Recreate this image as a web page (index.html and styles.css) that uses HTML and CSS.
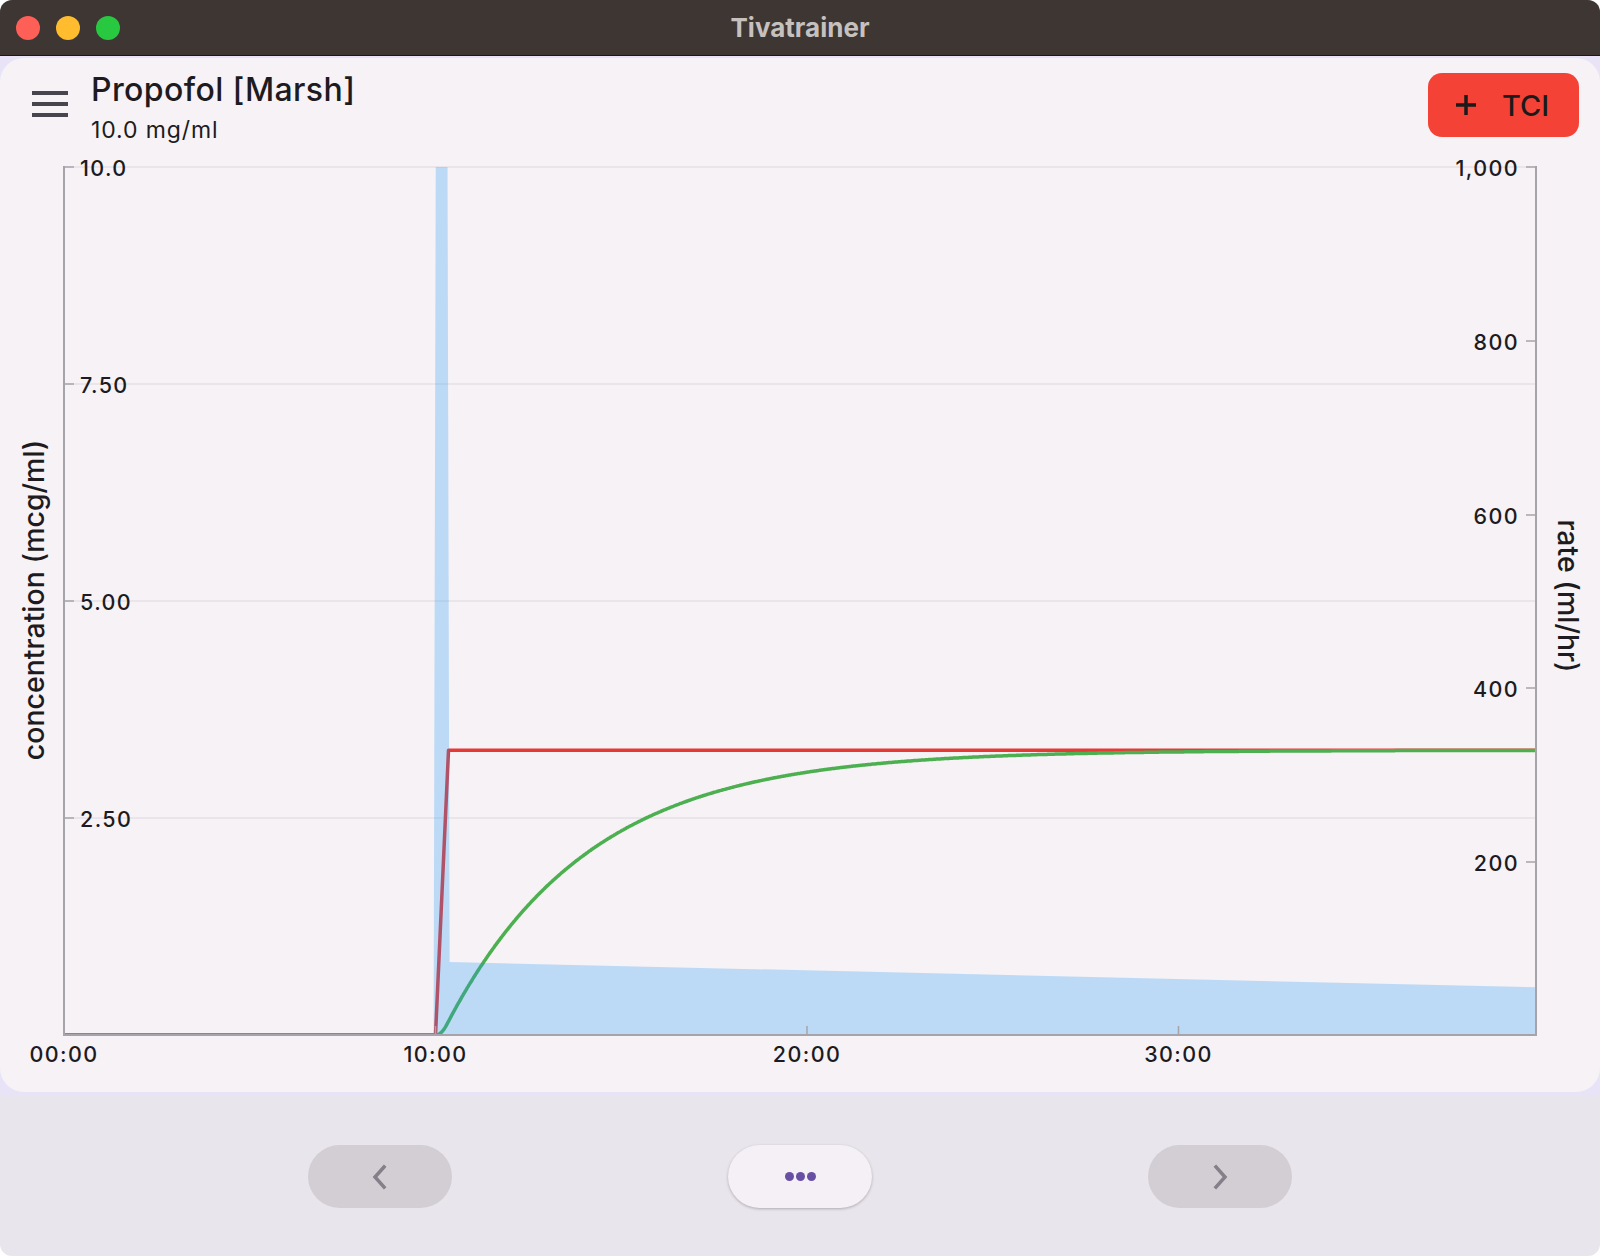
FILE: index.html
```html
<!DOCTYPE html>
<html lang="en">
<head>
    <meta charset="UTF-8">
    <meta name="viewport" content="width=device-width, initial-scale=1.0">
    <title>Tivatrainer</title>
    <link rel="stylesheet" href="styles.css">
</head>
<body>
    <div class="window">
        <div class="titlebar">
            <div class="lights">
                <span class="light red"></span>
                <span class="light yellow"></span>
                <span class="light green"></span>
            </div>
            <div class="window-title">Tivatrainer</div>
        </div>

        <div class="main">
            <div class="card">
                <header class="card-header">
                    <button class="menu-btn" aria-label="Menu">
                        <span></span><span></span><span></span>
                    </button>
                    <div class="drug">
                        <div class="drug-name">Propofol [Marsh]</div>
                        <div class="drug-conc">10.0 mg/ml</div>
                    </div>
                    <button class="tci-btn">
                        <svg class="plus" width="24" height="24" viewBox="0 0 24 24"><path d="M12 2v20M2 12h20" /></svg>
                        TCI
                    </button>
                </header>

                <svg class="chart" width="1600" height="942" viewBox="0 0 1600 942">
                    <defs>
                        <clipPath id="plot-area">
                            <rect x="64" y="17" width="1472" height="868"></rect>
                        </clipPath>
                    </defs>

                    <!-- grid -->
                    <g class="grid">
                        <line x1="64" y1="17" x2="1536" y2="17"></line>
                        <line x1="64" y1="234" x2="1536" y2="234"></line>
                        <line x1="64" y1="451" x2="1536" y2="451"></line>
                        <line x1="64" y1="668" x2="1536" y2="668"></line>
                    </g>

                    <!-- data -->
                    <g clip-path="url(#plot-area)">
                        <path id="target-line" class="line target"></path>
                        <path id="effect-line" class="line effect"></path>
                        <path id="rate-area" class="rate"></path>
                    </g>

                    <!-- axes -->
                    <g class="axis">
                        <line x1="64" y1="16" x2="64" y2="886"></line>
                        <line x1="1536" y1="16" x2="1536" y2="886"></line>
                        <line x1="63" y1="885" x2="1537" y2="885"></line>
                    </g>
                    <g class="ticks">
                        <line x1="64" y1="17" x2="74" y2="17"></line>
                        <line x1="64" y1="234" x2="74" y2="234"></line>
                        <line x1="64" y1="451" x2="74" y2="451"></line>
                        <line x1="64" y1="668" x2="74" y2="668"></line>

                        <line x1="1526" y1="17" x2="1536" y2="17"></line>
                        <line x1="1526" y1="191" x2="1536" y2="191"></line>
                        <line x1="1526" y1="365" x2="1536" y2="365"></line>
                        <line x1="1526" y1="538" x2="1536" y2="538"></line>
                        <line x1="1526" y1="712" x2="1536" y2="712"></line>

                        <line x1="435.5" y1="876" x2="435.5" y2="885"></line>
                        <line x1="807" y1="876" x2="807" y2="885"></line>
                        <line x1="1178.5" y1="876" x2="1178.5" y2="885"></line>
                    </g>

                    <g class="tick-label left">
                        <text x="80" y="18">10.0</text>
                        <text x="80" y="235">7.50</text>
                        <text x="80" y="452">5.00</text>
                        <text x="80" y="669">2.50</text>
                    </g>
                    <g class="tick-label right">
                        <text x="1519" y="18">1,000</text>
                        <text x="1519" y="192">800</text>
                        <text x="1519" y="366">600</text>
                        <text x="1519" y="539">400</text>
                        <text x="1519" y="713">200</text>
                    </g>
                    <g class="tick-label bottom">
                        <text x="64" y="904">00:00</text>
                        <text x="435.5" y="904">10:00</text>
                        <text x="807" y="904">20:00</text>
                        <text x="1178.5" y="904">30:00</text>
                    </g>

                    <text class="axis-title" transform="translate(33 450) rotate(-90)">concentration (mcg/ml)</text>
                    <text class="axis-title" transform="translate(1568 446) rotate(90)">rate (ml/hr)</text>
                </svg>
            </div>
        </div>

        <nav class="bottom-bar">
            <button class="nav-btn" aria-label="Previous">
                <svg width="24" height="28" viewBox="0 0 24 28"><path d="M16 4l-9 10 9 10" /></svg>
            </button>
            <button class="nav-btn more" aria-label="More">
                <span class="dot"></span><span class="dot"></span><span class="dot"></span>
            </button>
            <button class="nav-btn" aria-label="Next">
                <svg width="24" height="28" viewBox="0 0 24 28"><path d="M8 4l9 10-9 10" /></svg>
            </button>
        </nav>
    </div>

    <script>
        // plot area in chart coordinates
        const X0 = 64, X1 = 1536, Y0 = 17, Y1 = 885;
        const PX_PER_MIN = 37.15;
        const END = (X1 - X0) / PX_PER_MIN;

        const x = m => X0 + m * PX_PER_MIN;
        const yConc = c => Y1 - c * (Y1 - Y0) / 10;
        const yRate = r => Y1 - r * (Y1 - Y0) / 1000;

        const target = 3.28;
        const ke0 = 0.26; // per min

        function toPath(points) {
            return points.map((p, i) => (i ? 'L' : 'M') + p[0].toFixed(1) + ' ' + p[1].toFixed(1)).join(' ');
        }

        // target concentration (red)
        const targetPts = [[0, 0], [10.0, 0], [10.35, target], [END, target]];
        document.getElementById('target-line').setAttribute('d',
            toPath(targetPts.map(p => [x(p[0]), yConc(p[1])])));

        // effect site concentration (green)
        let ce = 0;
        const dt = 0.02;
        const effectPts = [];
        for (let t = 0; t <= END + dt; t += dt) {
            let cp = 0;
            if (t > 10.02) cp = Math.min(target, target * (t - 10.02) / 0.3);
            ce += ke0 * (cp - ce) * dt;
            effectPts.push([x(Math.min(t, END)), yConc(ce)]);
        }
        document.getElementById('effect-line').setAttribute('d', toPath(effectPts));

        // infusion rate (blue)
        const ratePts = [[9.95, 0], [10.03, 1400], [10.3, 1400], [10.38, 84], [END, 55], [END, 0]];
        document.getElementById('rate-area').setAttribute('d',
            toPath(ratePts.map(p => [x(p[0]), yRate(p[1])])) + ' Z');
    </script>
</body>
</html>
```

FILE: styles.css
```css
body {
    margin: 0;
    padding: 0;
    background-color: #fff;
    font-family: 'Inter', 'Roboto', sans-serif;
    color: #1d1b20;
}

button {
    font-family: inherit;
    border: none;
    cursor: pointer;
}

.window {
    width: 1600px;
    height: 1256px;
    border-radius: 12px;
    overflow: hidden;
    display: flex;
    flex-direction: column;
    background-color: #e8e5ec;
}

/* title bar */
.titlebar {
    height: 55px;
    flex-shrink: 0;
    background-color: #3e3633;
    border-bottom: 1px solid #1c1816;
    display: flex;
    align-items: center;
    position: relative;
}

.lights {
    display: flex;
    gap: 16px;
    padding-left: 16px;
}

.light {
    width: 24px;
    height: 24px;
    border-radius: 50%;
}

.light.red { background-color: #fe5f57; }
.light.yellow { background-color: #febc2e; }
.light.green { background-color: #28c840; }

.window-title {
    position: absolute;
    left: 0;
    right: 0;
    text-align: center;
    color: #c6c1bf;
    font-size: 26px;
    font-weight: 700;
}

/* main card */
.main {
    background-color: #e9e3f8;
    padding: 2px 0 3px;
}

.card {
    height: 1034px;
    background-color: #f6f2f6;
    border-radius: 24px;
    display: flex;
    flex-direction: column;
}

.card-header {
    height: 92px;
    flex-shrink: 0;
    display: flex;
    align-items: flex-start;
    padding: 0 21px 0 32px;
    box-sizing: border-box;
}

.menu-btn {
    width: 36px;
    height: 26px;
    margin-top: 33px;
    padding: 0;
    background: none;
    display: flex;
    flex-direction: column;
    justify-content: space-between;
}

.menu-btn span {
    display: block;
    width: 36px;
    height: 4px;
    background-color: #49454f;
}

.drug {
    margin-left: 23px;
    margin-top: 13px;
}

.drug-name {
    font-size: 32px;
    font-weight: 500;
    line-height: 38px;
    letter-spacing: 0.4px;
}

.drug-conc {
    font-size: 23px;
    line-height: 28px;
    margin-top: 7px;
    letter-spacing: 0.9px;
}

.tci-btn {
    margin-left: auto;
    margin-top: 15px;
    width: 151px;
    height: 64px;
    border-radius: 14px;
    background-color: #f44336;
    color: #1a1a1a;
    font-size: 29px;
    font-weight: 500;
    display: flex;
    align-items: center;
    justify-content: center;
}

.tci-btn .plus {
    margin-right: 24px;
    margin-left: -4px;
}

.tci-btn .plus path {
    stroke: #1a1a1a;
    stroke-width: 3.5;
}

/* chart */
.chart {
    display: block;
}

.grid line {
    stroke: #e5e0e6;
    stroke-width: 1.5;
}

.axis line {
    stroke: #a6a3aa;
    stroke-width: 2;
}

.ticks line {
    stroke: #a6a3aa;
    stroke-width: 1.5;
}

.line {
    fill: none;
    stroke-width: 3.5;
    stroke-linejoin: round;
}

.line.target { stroke: #e53935; }
.line.effect { stroke: #4caf50; }

.rate {
    fill: rgba(33, 150, 243, 0.27);
}

.tick-label text {
    font-size: 21.5px;
    font-weight: 500;
    letter-spacing: 1.4px;
    fill: #1d1b20;
    dominant-baseline: central;
}

.tick-label.right text { text-anchor: end; }
.tick-label.bottom text { text-anchor: middle; dominant-baseline: central; }

.axis-title {
    font-size: 28.5px;
    font-weight: 500;
    fill: #1d1b20;
    text-anchor: middle;
    dominant-baseline: central;
}

/* bottom navigation */
.bottom-bar {
    flex: 1;
    display: flex;
    justify-content: center;
    align-items: flex-start;
    gap: 276px;
    padding-top: 50px;
}

.nav-btn {
    width: 144px;
    height: 63px;
    border-radius: 32px;
    background-color: #d2ced4;
    display: flex;
    align-items: center;
    justify-content: center;
}

.nav-btn svg path {
    fill: none;
    stroke: #847f89;
    stroke-width: 3.5;
    stroke-linecap: square;
}

.nav-btn.more {
    background-color: #f4f0f5;
    box-shadow: 0 1px 3px rgba(0, 0, 0, 0.25);
    gap: 2px;
}

.dot {
    width: 9px;
    height: 9px;
    border-radius: 50%;
    background-color: #6750a4;
}
```
